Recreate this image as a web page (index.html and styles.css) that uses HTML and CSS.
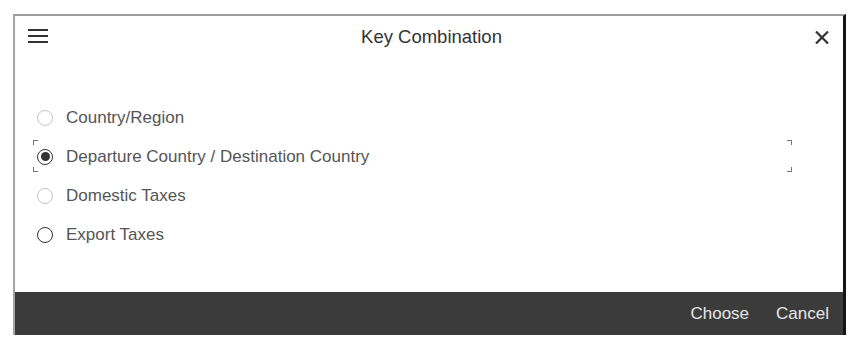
FILE: index.html
```html
<!DOCTYPE html>
<html>
<head>
<meta charset="utf-8">
<link rel="stylesheet" href="styles.css">
</head>
<body>
<div class="dialog">
  <header class="header">
    <span class="menu" aria-label="Menu">
      <svg width="20" height="14" viewBox="0 0 20 14"><rect x="0" y="0" width="20" height="2" fill="#333"/><rect x="0" y="6" width="20" height="2" fill="#333"/><rect x="0" y="12" width="20" height="2" fill="#333"/></svg>
    </span>
    <h1 class="title">Key Combination</h1>
    <span class="close" aria-label="Close">
      <svg width="14" height="13" viewBox="0 0 14 13"><path d="M1 0.5 L13 12.5 M13 0.5 L1 12.5" stroke="#333" stroke-width="2.2" fill="none"/></svg>
    </span>
  </header>
  <main class="content">
    <div class="option"><span class="radio disabled"></span><span class="label">Country/Region</span></div>
    <div class="option focused"><span class="radio selected"></span><span class="label">Departure Country / Destination Country</span></div>
    <div class="option"><span class="radio disabled"></span><span class="label">Domestic Taxes</span></div>
    <div class="option"><span class="radio"></span><span class="label">Export Taxes</span></div>
  </main>
  <footer class="footer">
    <button class="btn">Choose</button>
    <button class="btn">Cancel</button>
  </footer>
</div>
</body>
</html>
```
FILE: styles.css
```css
html, body {
  margin: 0;
  padding: 0;
  background: #fff;
  font-family: "Liberation Sans", Arial, sans-serif;
}
.dialog {
  margin: 14px 0 0 13px;
  width: 833px;
  height: 321px;
  box-sizing: border-box;
  border-top: 2px solid #9c9c9c;
  border-left: 2px solid #a4a4a4;
  border-right: 3px solid #161616;
  display: flex;
  flex-direction: column;
  background: #fff;
}
.header {
  height: 42px;
  display: flex;
  align-items: center;
  padding: 0 13px 0 13px;
}
.menu {
  display: flex;
  width: 20px;
  margin-top: -3px;
}
.title {
  flex: 1;
  margin: 0;
  text-align: center;
  font-size: 18.5px;
  font-weight: normal;
  color: #333;
}
.close {
  display: flex;
  width: 14px;
  margin-right: 1px;
}
.content {
  flex: 1;
  padding-top: 40px;
  display: flex;
  flex-direction: column;
}
.option {
  height: 39px;
  display: flex;
  align-items: center;
  margin: 0 51px 0 18px;
  padding-left: 4px;
  position: relative;
}
.option.focused::before {
  content: "";
  position: absolute;
  left: 0;
  right: 0;
  top: 3px;
  bottom: 4px;
  background:
    linear-gradient(#777, #777) left top / 5px 1px no-repeat,
    linear-gradient(#777, #777) left top / 1px 5px no-repeat,
    linear-gradient(#777, #777) right top / 5px 1px no-repeat,
    linear-gradient(#777, #777) right top / 1px 5px no-repeat,
    linear-gradient(#777, #777) left bottom / 5px 1px no-repeat,
    linear-gradient(#777, #777) left bottom / 1px 5px no-repeat,
    linear-gradient(#777, #777) right bottom / 5px 1px no-repeat,
    linear-gradient(#777, #777) right bottom / 1px 5px no-repeat;
}
.radio {
  width: 16px;
  height: 16px;
  box-sizing: border-box;
  border-radius: 50%;
  border: 1.5px solid #333;
  margin-right: 13px;
  flex: none;
  display: flex;
  align-items: center;
  justify-content: center;
}
.radio.disabled {
  border-color: #c6c6c6;
}
.radio.selected::after {
  content: "";
  width: 9px;
  height: 9px;
  border-radius: 50%;
  background: #333;
}
.label {
  font-size: 17px;
  color: #555;
}
.footer {
  height: 43px;
  background: #3b3b3b;
  display: flex;
  align-items: center;
  justify-content: flex-end;
  padding-right: 14px;
  gap: 27px;
}
.btn {
  background: none;
  border: none;
  padding: 0;
  font-family: "Liberation Sans", Arial, sans-serif;
  font-size: 17px;
  color: #e6e6e6;
  cursor: pointer;
}
```
